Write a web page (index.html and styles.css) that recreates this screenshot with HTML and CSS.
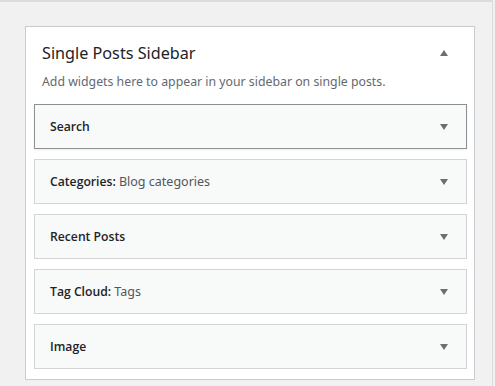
FILE: index.html
```html
<!DOCTYPE html>
<html lang="en">
<head>
    <meta charset="UTF-8">
    <meta name="viewport" content="width=device-width, initial-scale=1.0">
    <title>Widgets - Single Posts Sidebar</title>
    <link rel="stylesheet" href="styles.css">
</head>
<body>
    <div class="screen">
        <div class="sidebar-box">
            <div class="sidebar-head">
                <h2>Single Posts Sidebar</h2>
                <span class="arrow arrow-up"></span>
            </div>
            <p class="sidebar-desc">Add widgets here to appear in your sidebar on single posts.</p>

            <!-- widgets in this sidebar -->
            <div class="widget-list">
                <div class="widget widget-active">
                    <span class="widget-title">Search</span>
                    <span class="arrow arrow-down"></span>
                </div>
                <div class="widget">
                    <span class="widget-title">Categories: <span class="in-widget-title">Blog categories</span></span>
                    <span class="arrow arrow-down"></span>
                </div>
                <div class="widget">
                    <span class="widget-title">Recent Posts</span>
                    <span class="arrow arrow-down"></span>
                </div>
                <div class="widget">
                    <span class="widget-title">Tag Cloud: <span class="in-widget-title">Tags</span></span>
                    <span class="arrow arrow-down"></span>
                </div>
                <div class="widget">
                    <span class="widget-title">Image</span>
                    <span class="arrow arrow-down"></span>
                </div>
            </div>
        </div>
    </div>
</body>
</html>
```

FILE: styles.css
```css
* {
    margin: 0;
    padding: 0;
    box-sizing: border-box;
}

body {
    font-family: "Noto Sans", "Open Sans", sans-serif;
    background: #f1f1f1;
    color: #1d2327;
}

.screen {
    width: 493px;
    height: 386px;
    border-top: 2px solid #dcdcde;
    border-right: 1px solid #dcdcde;
    padding: 24px 0 0 25px;
}

.sidebar-box {
    width: 450px;
    background: #fff;
    border: 1px solid #c9cbce;
    padding-bottom: 10px;
}

.sidebar-head {
    display: flex;
    justify-content: space-between;
    align-items: center;
    padding: 14px 26px 0 16px;
}

.sidebar-head h2 {
    font-size: 16.2px;
    font-weight: 400;
    line-height: 24px;
    color: #1d2327;
}

.sidebar-desc {
    font-size: 12.3px;
    line-height: 18px;
    color: #646970;
    padding: 8px 0 0 16px;
}

.widget-list {
    display: flex;
    flex-direction: column;
    gap: 10px;
    padding: 13px 7px 0 8px;
}

.widget {
    height: 45px;
    display: flex;
    justify-content: space-between;
    align-items: center;
    background: #f8f9f9;
    border: 1px solid #d2d4d7;
    padding: 0 18px 0 15px;
}

.widget-active {
    border-color: #8c8f94;
    box-shadow: 0 1px 2px rgba(0, 0, 0, 0.08);
}

.widget-title {
    font-family: "Open Sans", "Noto Sans", sans-serif;
    font-size: 12.2px;
    font-weight: 600;
    color: #1d2327;
}

.in-widget-title {
    font-family: "Noto Sans", "Open Sans", sans-serif;
    font-size: 12.5px;
    font-weight: 400;
    color: #50575e;
}

.arrow {
    width: 0;
    height: 0;
    border-left: 4px solid transparent;
    border-right: 4px solid transparent;
}

.arrow-up {
    border-bottom: 6px solid #6a6f75;
}

.arrow-down {
    border-top: 6px solid #6a6f75;
}
```
